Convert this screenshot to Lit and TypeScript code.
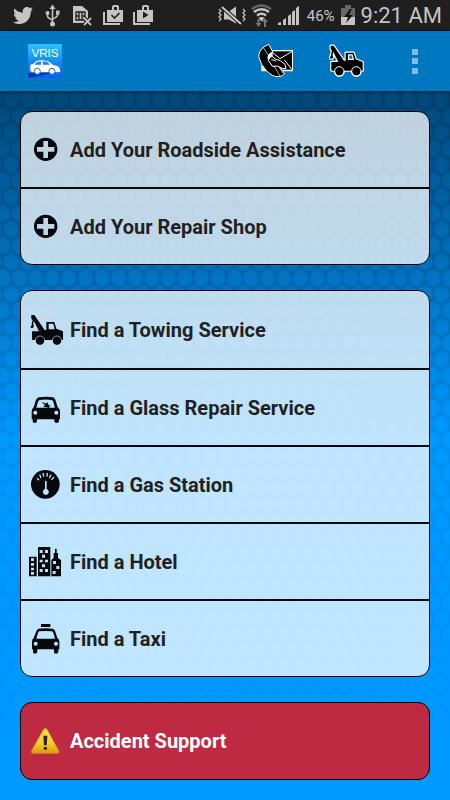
import { LitElement, html, css, svg } from "lit";
import { customElement, property } from "lit/decorators.js";

type Item = { icon: string; label: string };

const towTruck = svg`
  <path fill-rule="evenodd" d="M34 42h9l31 45h5V63h24l6 20 21 8v26H38v-1h-2V91h21L42 60l-2 7v6l2 3-4 5h-5l-1-6 4-2-1-6 3-10-4-4zM86 68v17h18l-4-17z"/>
  <circle cx="60" cy="119" r="13"/><circle cx="111" cy="119" r="13"/>`;

const icons: Record<string, { box: string; art: unknown }> = {
  add: {
    box: "87 38 102 102",
    art: svg`<circle cx="137" cy="87" r="35"/>
      <path fill="#c0d5e5" d="M130 62h14v18h19v14h-19v19h-14V94h-19V80h19z"/>`,
  },
  tow: {
    box: "27 36 102 102",
    art: svg`${towTruck}<g fill="none" stroke="#bfe0f6" stroke-width="2">
      <circle cx="60" cy="119" r="14"/><circle cx="111" cy="119" r="14"/></g>`,
  },
  glass: {
    box: "27 28 102 102",
    art: svg`<path fill-rule="evenodd" d="M56 47q22-4 43 0 6 2 8 10l6 20q7 4 7 12v24h-3v6q-1 5-7 5t-7-5v-6H51v6q-1 5-7 5t-6-5v-6h-3V89q0-8 6-12l6-20q3-8 9-10zM59 55q-4 1-5 6l-5 17h56l-5-17q-1-5-5-6-18-3-36 0z"/>
      <path d="M64 60l14 6 4-5 3 8 8 4-7 2 4 6-10-4-10-1 5-5z"/>
      <g fill="#bfe3fd"><circle cx="46" cy="93" r="6"/><circle cx="109" cy="93" r="6"/></g>`,
  },
  gas: {
    box: "27 36 102 102",
    art: svg`<circle cx="76" cy="85" r="43"/>
      <path fill="none" stroke="#bfe4ff" stroke-width="4" d="M51 67l6 6M59 56l4 10M69 51l2 11M82 51l-1 11M93 56l-5 10M102 64l-8 7"/>
      <path fill="#bfe4ff" d="M75 75h5v24a9 9 0 1 1-5 0z"/>`,
  },
  hotel: {
    box: "27 43 102 102",
    art: svg`<path d="M27 78h23v59H27zM54 49h37v88H54zM94 88l7-6V67h4V54h5v13h4v15l9 6v49H94z"/>
      <path fill="#bfe4ff" d="M33 83h9v8h-9zM33 97h9v8h-9zM33 111h9v8h-9zM33 124h9v8h-9zM59 58h9v9h-9zM75 58h9v9h-9zM66 72h9v9h-9zM59 87h9v8h-9zM75 87h9v8h-9zM66 101h9v9h-9zM59 115h9v9h-9zM75 115h9v9h-9zM99 91h9v9h-9zM109 106h9v9h-9zM98 121h9v9h-9z"/>`,
  },
  taxi: {
    box: "27 36 102 102",
    art: svg`<path fill-rule="evenodd" d="M63 42h28v9H63zM56 56q21-3 42 0 6 2 8 9l6 19q6 4 6 11v23h-3v8q-1 5-7 5t-6-5v-8H52v8q-1 5-7 5t-6-5v-8h-3V95q0-7 5-11l7-19q3-8 8-9zM58 64q-3 1-4 5l-5 17h56l-5-17q-1-4-5-5-18-2-37 0z"/>
      <g fill="#bfe4ff"><circle cx="47" cy="101" r="6"/><circle cx="108" cy="101" r="6"/></g>`,
  },
  warning: {
    box: "87 163 102 102",
    art: svg`<defs><linearGradient id="amber" x2="0" y2="1">
        <stop stop-color="#ffe44a"/><stop offset=".6" stop-color="#f7cb2c"/><stop offset="1" stop-color="#dc980c"/>
      </linearGradient></defs>
      <path fill="url(#amber)" stroke="#d39a24" stroke-width="2" stroke-linejoin="round" d="M131 179q5-5 10 0l35 64q3 8-5 8h-71q-8 0-5-8z"/>
      <path fill="#2b2410" d="M130 198h12l-2 29h-8z"/><circle cx="136" cy="236" r="5" fill="#2b2410"/>`,
  },
};

@customElement("service-card")
export class ServiceCard extends LitElement {
  @property({ attribute: false }) items: Item[] = [];
  @property() tone = "light";

  static styles = css`
    :host {
      display: block;
    }
    .card {
      display: grid;
      margin: 0;
      padding: 0;
      list-style: none;
      border: 1px solid #000;
      border-radius: 12px;
      overflow: hidden;
      background: rgba(255, 255, 255, 0.75);
      color: #231f20;
    }
    .card.even {
      grid-auto-rows: 1fr;
    }
    .card.alert {
      background: rgba(200, 36, 56, 0.95);
      color: #fff;
    }
    .item {
      display: grid;
      min-height: 75px;
    }
    .alert .item {
      min-height: 76px;
    }
    .item + .item {
      border-top: 2px solid #06090b;
    }
    .row {
      display: flex;
      align-items: center;
      gap: 7px;
      width: 100%;
      padding: 0 8px;
      border: 0;
      background: none;
      color: inherit;
      font: 700 20px/24px Roboto, sans-serif;
      text-align: left;
      cursor: pointer;
    }
    .icon {
      flex: none;
      width: 34px;
      height: 34px;
      fill: #06090b;
    }
  `;

  render() {
    return html`<ul class="card ${this.tone}">
      ${this.items.map(
        (item) => html`<li class="item">
          <button class="row" type="button">
            <svg class="icon" viewBox=${icons[item.icon].box} aria-hidden="true">${icons[item.icon].art}</svg>
            <span>${item.label}</span>
          </button>
        </li>`
      )}
    </ul>`;
  }
}

@customElement("status-bar")
export class StatusBar extends LitElement {
  static styles = css`
    :host {
      display: flex;
      justify-content: space-between;
      align-items: center;
      height: 30px;
      padding: 0 8px 0 12px;
      background: #1f1f1f;
      border-bottom: 1px solid #14100e;
      color: #c4c4c4;
      font-family: Roboto, sans-serif;
    }
    .group {
      display: flex;
      align-items: center;
    }
    .left {
      gap: 8px;
    }
    .right {
      gap: 5px;
    }
    svg {
      display: block;
      height: 30px;
      fill: #c4c4c4;
    }
    .charge {
      font-size: 15px;
      line-height: 30px;
      padding: 2px 0 0 3px;
    }
    .time {
      font-size: 22px;
      line-height: 30px;
      padding-top: 2px;
      white-space: nowrap;
    }
  `;

  render() {
    const bag = svg`<path fill-rule="evenodd" d="M6 10h5V7q0-2 2-2h3q2 0 2 2v3h4v12H6zM13 7v3h3V7z"/>
      <path d="M2 12h2v11h15v2H2z"/>`;
    return html`
      <div class="group left">
        <svg width="22" viewBox="0 0 22 30" aria-hidden="true">
          <path d="M21 9.500l-2.200 2c.2 7-5 12.500-11.300 12.500-2.400 0-4.600-.6-6.500-1.800 2.300.2 4.300-.4 6-1.700-1.800-.1-3.200-1.200-3.800-2.800h1.800C3 17.200 1.800 15.600 1.800 13.500l1.800.5C1.800 12.600 1.400 10.400 2.500 8.500c2.200 2.500 5 4 8.300 4.200C10.200 9.500 12.200 7 15 7c1.200 0 2.300.5 3 1.300L20.600 7.300 19 9.700z"/>
        </svg>
        <svg width="22" viewBox="0 0 22 30" aria-hidden="true">
          <g fill="none" stroke="#c4c4c4" stroke-width="1.600"><path d="M10.500 8v15M5.500 13v3q0 2 5 4M15.500 13v2q0 2-5 4"/></g>
          <path d="M10.500 4.500l3 4.500h-6z"/><circle cx="10.500" cy="24" r="2.500"/><circle cx="5.500" cy="13" r="2"/><path d="M14 10.500h3.500v4H14z"/>
        </svg>
        <svg width="22" viewBox="0 0 22 30" aria-hidden="true">
          <path d="M1 6h9l6 5v12H1z"/>
          <path fill="none" stroke="#1f1f1f" stroke-width="1.300" d="M4 12h9v8H4zM7 12v8M10 12v8M4 16h3M10 16h3"/>
          <path fill="none" stroke="#1f1f1f" stroke-width="4" d="M12 18l7 7M19 18l-7 7"/>
          <path fill="none" stroke="#c4c4c4" stroke-width="1.800" d="M12 18l7 7M19 18l-7 7"/>
        </svg>
        <svg width="22" viewBox="1 0 22 30" aria-hidden="true">${bag}
          <path fill="none" stroke="#1f1f1f" stroke-width="1.600" d="M10.500 15l3 3 5-5"/>
        </svg>
        <svg width="22" viewBox="1 0 22 30" aria-hidden="true">${bag}
          <path fill="#1f1f1f" d="M12 11.500v7l5.500-3.500z"/>
        </svg>
      </div>
      <div class="group right">
        <svg width="28" viewBox="0 0 28 30" aria-hidden="true">
          <path d="M6 11.500h5l7-5v17l-7-4H6z"/>
          <path stroke="#1f1f1f" stroke-width="4" d="M4 7l19 17"/><path stroke="#c4c4c4" stroke-width="2" d="M4 7l19 17"/>
          <path fill="none" stroke="#c4c4c4" stroke-width="1.200" d="M1 9l2 2-2 2 2 2-2 2 2 2-2 2M25 9l2 2-2 2 2 2-2 2 2 2-2 2"/>
        </svg>
        <svg width="21" viewBox="0 0 21 30" aria-hidden="true">
          <g fill="none" stroke-width="2.400"><path stroke="#666" d="M1 9q9-7 19 0"/><path stroke="#c4c4c4" d="M3 12q7.500-5.500 15 0M6 15.500q4.500-3.500 9 0"/></g>
          <path d="M7.500 18q3-2 6 0l-3 3.500z"/>
          <path fill="#777" d="M6.500 19h2v4h2l-3 4-3-4h2zM13 27h2v-5h2l-3-4-3 4h2z"/>
        </svg>
        <svg width="22" viewBox="0 0 22 30" aria-hidden="true">
          <path d="M1 25v-2l3-1v3zM6 20l3-2v7H6zM11 16l3-2v11h-3zM15 12l3-2v15h-3zM19 8l3-2v19h-3z"/>
        </svg>
        <span class="charge">46%</span>
        <svg width="16" viewBox="0 0 16 30" aria-hidden="true">
          <path fill="#666" d="M5 5h6v3h4v9H1V8h4z"/><path d="M1 17h14v8H1z"/>
          <path fill="#111" d="M10 9l-6 8h4l-2 6 7-8H9l3-6z"/>
        </svg>
        <span class="time">9:21 AM</span>
      </div>
    `;
  }
}

@customElement("app-root")
export class AppRoot extends LitElement {
  static styles = css`
    :host {
      display: flex;
      flex-direction: column;
      min-height: 100vh;
      font-family: Roboto, sans-serif;
    }
    .bar {
      display: flex;
      align-items: center;
      height: 60px;
      padding: 0 23px 0 28px;
      background: #0078c1;
      z-index: 1;
      box-shadow: 0 1px 3px rgba(0, 0, 0, 0.35);
    }
    .logo {
      display: block;
      width: 34px;
      height: 34px;
      margin-right: auto;
    }
    .action {
      display: block;
      padding: 0;
      border: 0;
      background: none;
      cursor: pointer;
    }
    .action svg {
      display: block;
      width: 36px;
      height: 34px;
    }
    .tow {
      margin: 0 38px 0 35px;
    }
    .action.more svg {
      width: 24px;
    }
    .content {
      position: relative;
      isolation: isolate;
      flex: 1;
      display: flex;
      flex-direction: column;
      gap: 25px;
      padding: 20px;
      background: linear-gradient(#004676 0, #004f85 30px, #0099ff 345px);
    }
    .texture {
      position: absolute;
      inset: 0;
      z-index: -1;
      width: 100%;
      height: 100%;
      mask-image: linear-gradient(#000 150px, rgba(0, 0, 0, 0.45) 360px, transparent 660px);
    }
  `;

  render() {
    return html`
      <status-bar></status-bar>
      <header class="bar">
        <svg class="logo" viewBox="84 42 102 102" role="img" aria-label="VRIS">
          <defs><linearGradient id="sky" x2="0" y2="1"><stop stop-color="#2cc4fa"/><stop offset=".55" stop-color="#1486f6"/><stop offset="1" stop-color="#0560f6"/></linearGradient></defs>
          <path fill="url(#sky)" d="M84 42h102v102H84z"/>
          <path fill="#0336a5" d="M84 130l102-6-102 20z"/>
          <text x="135" y="80" text-anchor="middle" font-family="Liberation Sans, sans-serif" font-size="35" fill="#fff">VRIS</text>
          <path fill="#fff" d="M91 106q2-4 9-5 7-9 20-10 20-3 33 9l6 5q18 2 21 12l1 8-6 2H98l-7-3z"/>
          <path fill="#2384ee" d="M104 102q6-7 19-8l1 10h-20zM128 94q14-1 22 10h-21z"/>
          <g fill="#fff" stroke="#1c6de9" stroke-width="3"><circle cx="112" cy="124" r="9"/><circle cx="156" cy="124" r="9"/></g>
        </svg>
        <button class="action" type="button" aria-label="Contact">
          <svg viewBox="97 43 108 102" aria-hidden="true">
            <path fill="#fff" d="M107 61h95v64h-95z"/>
            <path d="M141 65h58v55h-58z"/>
            <path fill="none" stroke="#fff" stroke-width="3" d="M138 66l25 21 37-22M176 91l23 29"/>
            <path stroke="#fff" stroke-width="3" stroke-linejoin="round" d="M116 51l13-7 12 22-11 8q-6 8-1 18 5 13 15 19l13-5 20 26q-6 9-19 9-17 1-35-17-19-20-23-40-3-20 16-33z"/>
            <path fill="none" stroke="#fff" stroke-width="2" d="M113 54l14 21M146 111l17 28M157 107l16 25"/>
            <path stroke="#fff" stroke-width="3" stroke-linejoin="round" d="M128 93q2-10 11-13l12 9 13 4 14 11 3 13-12-1-14-7-14 1z"/>
            <path fill="none" stroke="#fff" stroke-width="3" d="M137 91q9-2 14 4"/>
          </svg>
        </button>
        <button class="action tow" type="button" aria-label="Towing">
          <svg viewBox="29 37 108 102" aria-hidden="true">
            <g stroke="#fff" stroke-width="7" stroke-linejoin="round">${towTruck}</g>
            ${towTruck}
            <g fill="none" stroke="#fff" stroke-width="3"><circle cx="60" cy="119" r="14"/><circle cx="111" cy="119" r="14"/></g>
          </svg>
        </button>
        <button class="action more" type="button" aria-label="More options">
          <svg viewBox="0 0 24 34" aria-hidden="true"><path fill="#80bce0" d="M9 5h6v6H9zM9 14h6v6H9zM9 24h6v6H9z"/></svg>
        </button>
      </header>
      <main class="content">
        <svg class="texture" aria-hidden="true">
          <defs>
            <pattern id="cells" x="2.700" y="0.500" width="16.560" height="32.440" patternUnits="userSpaceOnUse">
              <path fill="#000c1c" fill-opacity=".15" fill-rule="evenodd"
                d="M0 0H16.560V32.440H0zM1 8.110a7.280 8 0 1 0 14.560 0a7.280 8 0 1 0-14.560 0zM-7.280 24.330a7.280 8 0 1 0 14.560 0a7.280 8 0 1 0-14.560 0zM9.280 24.330a7.280 8 0 1 0 14.560 0a7.280 8 0 1 0-14.560 0z"/>
            </pattern>
          </defs>
          <rect width="100%" height="100%" fill="url(#cells)"/>
        </svg>
        <service-card .items=${[
          { icon: "add", label: "Add Your Roadside Assistance" },
          { icon: "add", label: "Add Your Repair Shop" },
        ]}></service-card>
        <service-card tone="even" .items=${[
          { icon: "tow", label: "Find a Towing Service" },
          { icon: "glass", label: "Find a Glass Repair Service" },
          { icon: "gas", label: "Find a Gas Station" },
          { icon: "hotel", label: "Find a Hotel" },
          { icon: "taxi", label: "Find a Taxi" },
        ]}></service-card>
        <service-card tone="alert" .items=${[{ icon: "warning", label: "Accident Support" }]}></service-card>
      </main>
    `;
  }
}
